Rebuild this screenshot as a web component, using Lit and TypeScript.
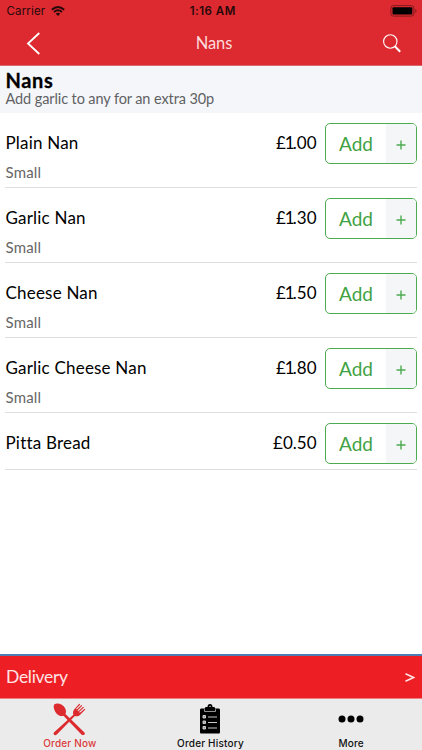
import { LitElement, html, css, svg } from "lit";
import { customElement, property } from "lit/decorators.js";

interface Item { name: string; size?: string; price: string; }

const ITEMS: Item[] = [
  { name: "Plain Nan", size: "Small", price: "£1.00" },
  { name: "Garlic Nan", size: "Small", price: "£1.30" },
  { name: "Cheese Nan", size: "Small", price: "£1.50" },
  { name: "Garlic Cheese Nan", size: "Small", price: "£1.80" },
  { name: "Pitta Bread", price: "£0.50" },
];

@customElement("menu-row")
class MenuRow extends LitElement {
  @property({ attribute: false }) item!: Item;
  static styles = css`
    :host { display: flex; box-sizing: border-box; margin: 0 5px; padding-top: 10px; height: 75px; border-bottom: 1px solid #dededf; color: #000; }
    :host([short]) { height: 57px; }
    .text { flex: 1; padding-left: .5px; }
    .name { font-size: 17px; line-height: 40px; letter-spacing: 0.2px; }
    .size { font-size: 15px; line-height: 19px; color: #666; letter-spacing: 0.2px; }
    .price { font-size: 17px; line-height: 40px; margin-right: 8.5px; }
    .one { letter-spacing: -1.2px; margin-right: -.6px; }
    .add { display: flex; box-sizing: border-box; width: 92px; height: 41px; border: 1px solid #4cab50; border-radius: 5px; overflow: hidden; padding: 0; background: #fff; color: #3fa243; font: inherit; }
    .label { flex: 1; font-size: 19px; line-height: 39px; text-align: center; }
    .plus { width: 30px; background: #f5f6f8; display: grid; place-items: center; }
    svg { display: block; margin-top: 2px; }
  `;
  render() {
    const { name, size, price } = this.item;
    const amount = price.startsWith("£1")
      ? html`<span class="one">£1</span>${price.slice(2)}`
      : price;
    return html`
      <div class="text">
        <div class="name">${name}</div>
        ${size ? html`<div class="size">${size}</div>` : ""}
      </div>
      <div class="price">${amount}</div>
      <button class="add"><span class="label">Add</span><span class="plus">
        <svg width="10" height="10" viewBox="0 0 10 10"><path d="M5 .5V9.500M.5 5H9.500" stroke="#4cab50" stroke-width="1.400"/></svg>
      </span></button>`;
  }
}

const utensils = svg`
  <g fill="#dc2a2f" stroke="none">
    <path d="M1.500 1.200C5-.5 10.500 1.500 12.500 5.500C13.700 8 13.500 10 12.800 11.300L32.400 30.300Q33.400 32 32 32.800Q30.500 33.500 29.300 32.400L10.800 13.200C8.500 14 5 12.800 3 10C.8 7 0 2.800 1.500 1.200Z"/>
    <path d="M27 .8L22 6.500C20.300 8.500 20.500 10.500 21 12L.9 30.300Q0 32 1.400 33Q2.800 33.500 3.900 32.400L22.500 13.500C24.500 14.200 26.500 13.500 28 12L33.300 6.800L32.600 6L27.700 10.100L26.900 9.300L31.900 4.700L31.100 3.900L26 8.400L25.300 7.700L30.100 2.900L29.300 2.100L24.500 6.700L23.800 6L28.100 1.600Z"/>
  </g>`;
const clipboard = svg`
  <path d="M2 4.500H20Q21 4.500 21 6V28Q21 29.500 20 29.500H2Q1 29.500 1 28V6Q1 4.500 2 4.500Z"/>
  <path d="M5.500 5.300V7.400H16.500V5.300" fill="none" stroke="#ebebeb" stroke-width=".7"/>
  <path d="M6 6.500V4Q6 3 7 3H8.500Q8.500 0 11 0T13.500 3H15Q16 3 16 4V6.500Z"/>
  <circle cx="11" cy="2.400" r=".7" fill="#ebebeb"/>
  <g fill="#999" stroke="#ddd" stroke-width=".9"><path d="M4 11.500h2.500v2.500H4zM4 17h2.500v2.500H4zM4 22.500h2.500v2.500H4z"/><path d="M9 13H18M9 18.500H18M9 24H18"/></g>`;

@customElement("app-root")
class AppRoot extends LitElement {
  static styles = css`
    :host { display: flex; flex-direction: column; height: 750px; width: 422px; background: #fff; overflow: hidden; font-family: Lato, sans-serif; }
    svg { display: block; }
    .top { background: #dc2a30; height: 65px; border-bottom: 1px solid #d76a70; }
    .status { display: grid; grid-template-columns: 1fr auto 1fr; align-items: center; height: 22px; padding: 0 5px 0 6.500px; font: 11.500px Inter, sans-serif; color: #26090a; }
    .carrier { display: flex; gap: 6px; align-items: center; letter-spacing: .15px; }
    .time { font-weight: 600; letter-spacing: .48px; padding-left: 2px; }
    .battery { justify-self: end; }
    .nav { display: grid; grid-template-columns: 1fr auto 1fr; align-items: center; height: 43px; padding: 0 21px 0 26px; }
    .title { color: #fbdcdd; font-size: 16.500px; letter-spacing: -.1px; margin-top: -1px; padding-left: 1px; }
    .search { justify-self: end; margin-top: -1px; }
    .section { background: #f5f6f9; height: 47px; padding: 4px 5.500px 0; box-sizing: border-box; }
    .section h1 { margin: 0; font-size: 20px; line-height: 21px; letter-spacing: .6px; -webkit-text-stroke: .3px #000; }
    .section p { margin: 0; font-size: 14.500px; line-height: 16px; letter-spacing: -.1px; color: #606164; }
    .list { flex: 1; }
    .delivery { display: flex; justify-content: space-between; align-items: center; box-sizing: border-box; height: 45px; border-top: 2px solid #4d7cb5; border-bottom: 1px solid #e98082; background: #ed1f24; color: #ffe4e4; padding: 0 7px 0 6px; font-size: 17.500px; letter-spacing: -.3px; }
    .delivery span { margin-top: -1px; }
    .delivery svg { margin-top: 1px; }
    .tabs { display: grid; grid-template-columns: repeat(3, 1fr); height: 51px; background: #ebebeb; }
    .tab { display: flex; flex-direction: column; align-items: center; margin-left: -1px; font: 500 10px/12px Inter, sans-serif; letter-spacing: .18px; color: #111; }
    .icon { height: 38px; box-sizing: border-box; padding-top: 2px; display: grid; place-items: center; }
    .active { color: #dc3b40; }
  `;
  render() {
    return html`
      <header class="top">
        <div class="status">
          <div class="carrier"><span>Carrier</span>
            <svg width="14" height="10" viewBox="0 0 14 10" fill="none" stroke="#26090a" stroke-width="1.900"><path d="M.8 3.800Q7-1.800 13.200 3.800M3 6Q7 2.500 11 6"/><path d="M7 10L4.800 7.700Q7 5.900 9.200 7.700Z" fill="#26090a" stroke="none"/></svg>
          </div>
          <span class="time">1:16 AM</span>
          <svg class="battery" width="27" height="12" viewBox="0 0 27 12"><rect x=".9" y=".6" width="23" height="10.500" rx="2.500" fill="none" stroke="#841a1e"/><rect x="2.500" y="2.200" width="19.800" height="7.300" rx="1" fill="#000"/><path d="M25.300 4V8Q26.500 7.500 26.500 6T25.300 4" fill="#841a1e"/></svg>
        </div>
        <nav class="nav">
          <svg width="15" height="24" viewBox="0 0 15 24" fill="none" stroke="#fff" stroke-width="1.800"><path d="M13.300 1L2 11.500L13.300 22"/></svg>
          <span class="title">Nans</span>
          <svg class="search" width="18" height="19" viewBox="0 0 18 19" fill="none" stroke="#fff"><circle cx="7.300" cy="7.500" r="6.700" stroke-width="1.100"/><path d="M11.800 12.300L17.200 17.800" stroke-width="2"/></svg>
        </nav>
      </header>
      <section class="section"><h1>Nans</h1><p>Add garlic to any for an extra 30p</p></section>
      <main class="list">${ITEMS.map((i) => html`<menu-row .item=${i} ?short=${!i.size}></menu-row>`)}</main>
      <div class="delivery"><span>Delivery</span><svg width="10" height="9" viewBox="0 0 10 9" fill="none" stroke="#ffe4e4" stroke-width="1.500"><path d="M.5 .8L8.500 4.500L.5 8.200"/></svg></div>
      <footer class="tabs">
        <div class="tab active"><div class="icon"><svg width="33" height="33" viewBox="0 0 34 34">${utensils}</svg></div>Order Now</div>
        <div class="tab"><div class="icon"><svg width="22" height="30" viewBox="0 0 22 30">${clipboard}</svg></div>Order History</div>
        <div class="tab"><div class="icon"><svg width="26" height="8" viewBox="0 0 26 8"><circle cx="4" cy="4" r="3.500"/><circle cx="13" cy="4" r="3.500"/><circle cx="22" cy="4" r="3.500"/></svg></div>More</div>
      </footer>`;
  }
}
